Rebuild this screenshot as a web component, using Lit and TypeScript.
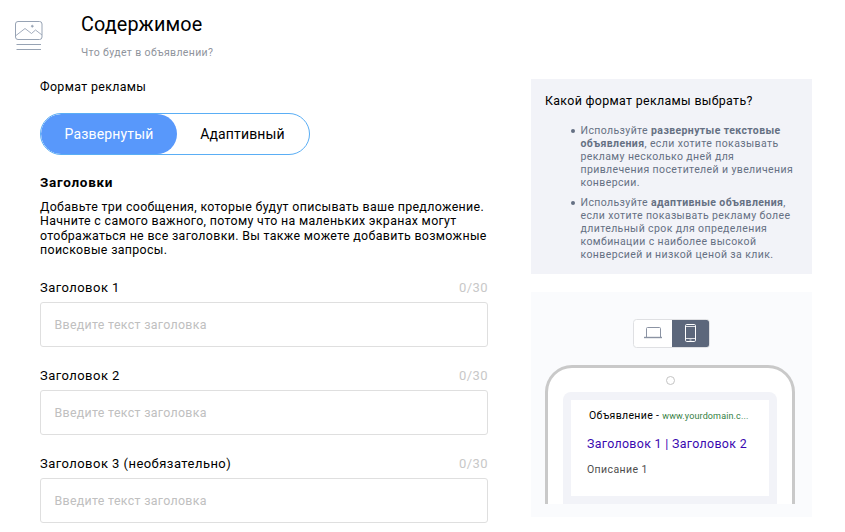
import { LitElement, html, css } from "lit";
import { customElement } from "lit/decorators.js";

const fields = [
  { label: "Заголовок 1" },
  { label: "Заголовок 2" },
  { label: "Заголовок 3 (необязательно)" },
];

@customElement("app-root")
export class AppRoot extends LitElement {
  static styles = css`
    :host { display: block; height: 532px; overflow: hidden; background: #fff; color: #000; font-family: Roboto, "Liberation Sans", sans-serif; }
    * { box-sizing: border-box; }
    .header { display: flex; height: 79px; padding-left: 15px; }
    .pic { margin-top: 21px; width: 28px; height: 30px; }
    .titles { margin-left: 38px; padding-top: 12px; white-space: nowrap; }
    .title { font-size: 19.8px; line-height: 25px; letter-spacing: 0.15px; }
    .sub { font-size: 10.5px; line-height: 14px; margin-top: 9px; color: #8f949c; letter-spacing: 0.36px; }
    .body { display: flex; padding-left: 40px; }
    .left { width: 448px; margin-right: 43px; }
    .format { font-size: 12.4px; line-height: 16px; letter-spacing: 0.35px; }
    .toggle { margin-top: 18px; width: 270px; height: 42px; display: flex; border: 1px solid #5aaef5; border-radius: 21px; overflow: hidden; font-size: 14px; letter-spacing: 0.15px; line-height: 40px; text-align: center; }
    .on { width: 136px; background: #5898fb; color: #fff; border-radius: 20px; }
    .off { width: 131px; }
    .h { margin-top: 18px; font-size: 13.5px; line-height: 18px; font-weight: 700; letter-spacing: 0.72px; }
    .desc { margin-top: 9px; font-size: 12.4px; line-height: 14.3px; letter-spacing: 0.33px; white-space: nowrap; }
    .field { height: 88px; }
    .fields { margin-top: 22px; }
    .row { display: flex; justify-content: space-between; font-size: 13px; line-height: 18px; letter-spacing: 0.46px; }
    .count { color: #c8c8c8; }
    .input { margin-top: 5px; height: 45px; border: 1px solid #dfdfdf; border-radius: 3px; padding-left: 13.500px; line-height: 43px; font-size: 12.4px; letter-spacing: 0.31px; color: #c0c0c0; }
    .right { width: 281px; }
    .tip { height: 195px; background: #f2f3f8; padding: 14px; }
    .tip-h { font-size: 12.4px; line-height: 16px; letter-spacing: 0.33px; }
    ul { list-style: none; margin: 15px 0 0; padding: 0 0 0 35.500px; font-size: 10.5px; line-height: 13px; color: #657083; letter-spacing: 0.39px; white-space: nowrap; }
    li { margin-bottom: 7px; }
    li::before { content: ""; float: left; width: 4px; height: 4px; margin: 5px 0 0 -9.500px; border-radius: 50%; background: #657083; }
    .preview { margin-top: 18px; height: 225px; background: #fafbfd; padding-top: 27px; }
    .switch { margin-left: 102px; width: 77px; height: 29px; display: block; }
    .phone { margin: 17px 0 0 14px; width: 250px; height: 139px; border: 3px solid #c9c9c9; border-bottom: 0; border-radius: 27px 27px 0 0; background: #fff; padding: 8px 15px 0; }
    .cam { width: 9px; height: 9px; border: 1px solid #c4c4c4; border-radius: 50%; margin: 0 auto 7px; }
    .screen { height: 112px; background: #f2f3f8; border-radius: 8px 8px 0 0; padding: 8px; }
    .ad { height: 96px; background: #fff; padding: 9px 16px 0; white-space: nowrap; }
    .url { display: flex; font-size: 10.5px; line-height: 14px; padding-left: 2px; letter-spacing: 0.34px; }
    .url span { color: #35803f; font-size: 9px; margin-left: 3px; letter-spacing: 0.13px; }
    .ad-h { margin-top: 13px; color: #3a08b0; font-size: 12.4px; line-height: 16px; letter-spacing: 0.33px; }
    .ad-d { margin-top: 11px; color: #4d4d4d; font-size: 10.5px; line-height: 13px; letter-spacing: 0.4px; }
  `;

  render() {
    return html`
      <div class="header">
        <svg class="pic" viewBox="0 0 28 30" fill="none" stroke="#97a3b4">
          <rect x="0.5" y="0.5" width="26.500" height="18" rx="2.500" />
          <path d="M1 14.500 10 7.500l6.500 5 4-3.500 6.500 5" stroke-width="0.900" />
          <path d="M1.500 23.500H26M1.500 28.500H26" />
          <circle cx="17.300" cy="5.200" r="1" fill="#97a3b4" stroke-width="0.600" />
        </svg>
        <div class="titles"><div class="title">Содержимое</div><div class="sub">Что будет в объявлении?</div></div>
      </div>
      <div class="body">
        <div class="left">
          <div class="format">Формат рекламы</div>
          <div class="toggle"><div class="on">Развернутый</div><div class="off">Адаптивный</div></div>
          <div class="h">Заголовки</div>
          <div class="desc">Добавьте три сообщения, которые будут описывать ваше предложение.<br />Начните с самого важного, потому что на маленьких экранах могут<br />отображаться не все заголовки. Вы также можете добавить возможные<br />поисковые запросы.</div>
          <div class="fields">${fields.map((f) => html`<div class="field"><div class="row"><span>${f.label}</span><span class="count">0/30</span></div><div class="input">Введите текст заголовка</div></div>`)}</div>
        </div>
        <div class="right">
          <div class="tip">
            <div class="tip-h">Какой формат рекламы выбрать?</div>
            <ul>
              <li>Используйте <b>развернутые текстовые<br />объявления</b>, если хотите показывать<br />рекламу несколько дней для<br />привлечения посетителей и увеличения<br />конверсии.</li>
              <li>Используйте <b>адаптивные объявления</b>,<br />если хотите показывать рекламу более<br />длительный срок для определения<br />комбинации с наиболее высокой<br />конверсией и низкой ценой за клик.</li>
            </ul>
          </div>
          <div class="preview">
            <svg class="switch" viewBox="0 0 77 29" fill="none">
              <rect x="0.5" y="0.5" width="76" height="28" rx="3" fill="#fff" stroke="#dfe0e3" />
              <path d="M39 1h34.500a2.500 2.500 0 0 1 2.500 2.500v22a2.500 2.500 0 0 1-2.500 2.500H39z" fill="#5c677b" />
              <path d="M13.500 18V9.500a1 1 0 0 1 1-1h12a1 1 0 0 1 1 1V18" stroke="#8b93a3" />
              <path d="M11 18.500h18" stroke="#8b93a3" stroke-width="1.400" />
              <rect x="52.500" y="5.500" width="10" height="17" rx="1.200" stroke="#fff" />
              <path d="M52.500 7.500h10M52.500 19.500h10M56.500 21h2" stroke="#fff" stroke-width="0.800" />
            </svg>
            <div class="phone"><div class="cam"></div><div class="screen"><div class="ad">
              <div class="url">Объявление - <span>www.yourdomain.c...</span></div>
              <div class="ad-h">Заголовок 1 | Заголовок 2</div>
              <div class="ad-d">Описание 1</div>
            </div></div></div>
          </div>
        </div>
      </div>`;
  }
}
